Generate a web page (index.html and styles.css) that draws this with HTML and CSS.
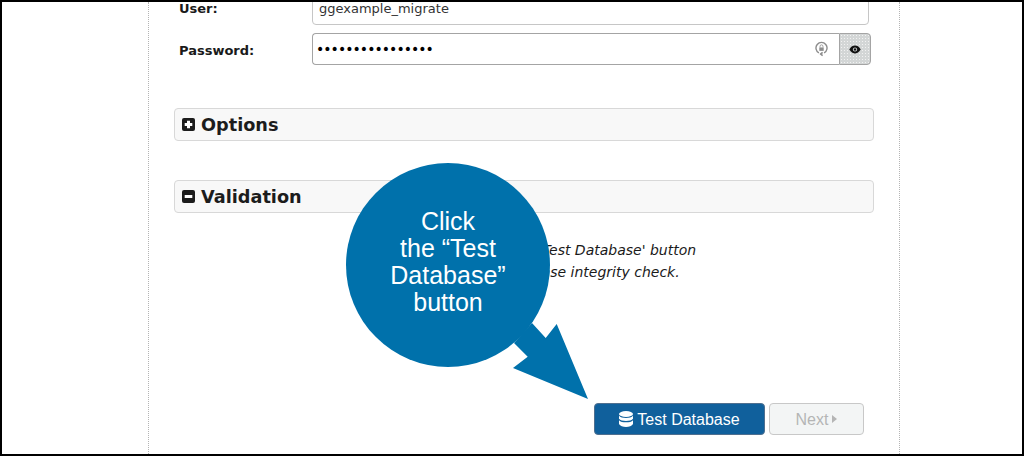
FILE: index.html
```html
<!DOCTYPE html>
<html lang="en">
<head>
<meta charset="utf-8">
<title>Test Database</title>
<link rel="stylesheet" href="styles.css">
</head>
<body>
<div class="frame">
  <main class="panel">
    <div class="row row-user">
      <label class="label label-user">User:</label>
      <div class="input input-user">ggexample_migrate</div>
    </div>
    <div class="row row-pass">
      <label class="label label-pass">Password:</label>
      <div class="group">
        <div class="input input-pass">
          <span class="dots">••••••••••••••••</span>
          <svg class="lock" width="13" height="16" viewBox="0 0 16 19" fill="none" stroke="#8c8c8c" stroke-width="1.700">
            <path d="M4.800 14.200A6.800 6.800 0 1 1 11.200 14.200"/>
            <path d="M9.300 13.600 6.800 15.600l2.500 2.200" stroke-width="1.700"/>
            <path d="M7 15.600h2.300"/>
            <rect x="5.300" y="7.600" width="5.400" height="4.200" fill="#8c8c8c" stroke="none"/>
            <path d="M6.200 7.600V6.200a1.800 1.800 0 0 1 3.600 0v1.400" stroke-width="1"/>
          </svg>
        </div>
        <button class="eye" type="button" aria-label="Show password">
          <svg width="12" height="9" viewBox="0 0 12 9">
            <path d="M0.300 4.500C2 1.500 4 .6 6 .6s4 .9 5.700 3.900C10 7.500 8 8.400 6 8.400S2 7.500.3 4.500Z" fill="#111"/>
            <circle cx="6" cy="4.500" r="2.100" fill="#d9dcdc"/>
            <circle cx="6" cy="4.500" r="1.200" fill="#111"/>
          </svg>
        </button>
      </div>
    </div>
    <section class="bar bar-options">
      <svg class="sq" width="13" height="13" viewBox="0 0 13 13"><rect width="13" height="13" rx="2" fill="#1c1c1c"/><path d="M5 2.700h3v2.300h2.300v3H8v2.300H5V8H2.700V5h2.300Z" fill="#fff"/></svg>
      <h2 class="bar-title">Options</h2>
    </section>
    <section class="bar bar-validation">
      <svg class="sq" width="13" height="13" viewBox="0 0 13 13"><rect width="13" height="13" rx="2" fill="#1c1c1c"/><rect x="2.700" y="5" width="7.600" height="3" fill="#fff"/></svg>
      <h2 class="bar-title">Validation</h2>
    </section>
    <p class="message">When you're set, click the 'Test Database' button<br>to perform a basic database integrity check.</p>
    <div class="actions">
      <button class="btn btn-primary" type="button">
        <svg width="14" height="16" viewBox="0 0 14 16" fill="#fff">
          <ellipse cx="7" cy="3" rx="7" ry="3"/>
          <path d="M0 4.800C1.200 6.500 4 7 7 7s5.800-.5 7-2.200v3C13 9.500 10 10 7 10S1 9.500 0 7.800Z"/>
          <path d="M0 9.200C1.200 10.800 4 11.300 7 11.300s5.800-.5 7-2.100V13c-1 1.900-4 3-7 3s-6-1.100-7-3Z"/>
        </svg>
        <span class="btn-text">Test Database</span>
      </button>
      <button class="btn btn-next" type="button">
        <span class="btn-text">Next</span>
        <svg width="5" height="8" viewBox="0 0 5 8"><path d="M0 0 5 4 0 8Z" fill="#b5b5b5"/></svg>
      </button>
    </div>
  </main>
  <aside class="callout">
    <svg class="callout-shape" width="250" height="240" viewBox="0 0 250 240">
      <circle cx="102" cy="102" r="102" fill="#0071ab"/>
      <path d="M186 160 199.700 175 210.700 161 242 236 167 205 181.700 193.700 168 180Z" fill="#0071ab"/>
    </svg>
    <div class="callout-text">Click<br>the “Test<br>Database”<br>button</div>
  </aside>
</div>
</body>
</html>
```

FILE: styles.css
```css
* { box-sizing: border-box; }

html, body {
  margin: 0;
  padding: 0;
  background: #fff;
}

.frame {
  position: relative;
  width: 1024px;
  height: 456px;
  border: 2px solid #000;
  overflow: hidden;
  background: #fff;
}

.panel {
  width: 752px;
  height: 452px;
  margin-left: 146px;
  padding: 0 25px;
  border-left: 1px dotted #b4b4b4;
  border-right: 1px dotted #b4b4b4;
  font-family: "DejaVu Sans", sans-serif;
  color: #1a1a1a;
  overflow: hidden;
}

.row {
  display: flex;
  align-items: center;
}

.row-user {
  margin-top: -9px;
  height: 32px;
}

.row-pass {
  margin-top: 8px;
  height: 32px;
}

.label {
  width: 138px;
  padding-left: 5px;
  font-size: 13px;
  font-weight: 700;
}

.label-user { padding-bottom: 2px; }
.label-pass { padding-top: 2px; }

.input {
  display: flex;
  align-items: center;
  height: 32px;
  font-size: 13px;
  background: #fff;
}

.input-user {
  width: 557px;
  padding: 0 0 2px 6px;
  border: 1px solid #c6c6c6;
  border-radius: 4px;
  color: #333;
}

.group {
  display: flex;
  width: 559px;
}

.input-pass {
  flex: 1;
  justify-content: space-between;
  padding: 0 11px 0 3px;
  border: 1px solid #a4a4a4;
  border-right: 0;
  border-radius: 4px 0 0 4px;
}

.dots {
  font-size: 14px;
  letter-spacing: -0.95px;
  color: #000;
  line-height: 1;
}

.lock { display: block; }

.eye {
  display: flex;
  align-items: center;
  justify-content: center;
  width: 32px;
  height: 32px;
  padding: 0;
  border: 1px solid #a4a4a4;
  border-radius: 0 4px 4px 0;
  background-color: #d3d6d6;
  background-image: radial-gradient(circle, #f2f2f2 0.6px, transparent 0.8px);
  background-size: 3px 3px;
}

.bar {
  display: flex;
  align-items: center;
  gap: 6px;
  width: 700px;
  height: 33px;
  padding-left: 7px;
  border: 1px solid #d8d8d8;
  border-radius: 4px;
  background: #f8f8f8;
}

.bar-options { margin-top: 43px; }
.bar-validation { margin-top: 39px; }

.sq { display: block; flex: none; }

.bar-title {
  margin: 0;
  padding-top: 3px;
  font-size: 17.7px;
  font-weight: 700;
  line-height: 1;
  color: #1c1c1c;
}

.message {
  width: 700px;
  margin: 26px 0 0;
  text-align: center;
  font-size: 14px;
  font-style: italic;
  line-height: 22px;
  color: #1a1a1a;
}

.actions {
  display: flex;
  justify-content: flex-end;
  gap: 4px;
  width: 690px;
  margin-top: 120px;
}

.btn {
  display: flex;
  align-items: center;
  justify-content: center;
  gap: 4px;
  height: 32px;
  padding: 0;
  border-radius: 4px;
  font-family: "Liberation Sans", Arial, sans-serif;
  font-size: 16px;
}

.btn-text { padding-top: 1px; }

.btn-primary {
  width: 171px;
  border: 1px solid #4f6f8f;
  background: #10609c;
  color: #fff;
}

.btn-next {
  width: 95px;
  border: 1px solid #c8c8c8;
  background: #f3f5f5;
  color: #b5b5b5;
}

.callout {
  position: absolute;
  left: 344px;
  top: 161px;
  width: 250px;
  height: 240px;
}

.callout-shape { display: block; }

.callout-text {
  position: absolute;
  left: 0;
  top: 45px;
  width: 204px;
  text-align: center;
  font-family: "Liberation Sans", Arial, sans-serif;
  font-size: 25px;
  line-height: 27px;
  color: #fff;
}
```
